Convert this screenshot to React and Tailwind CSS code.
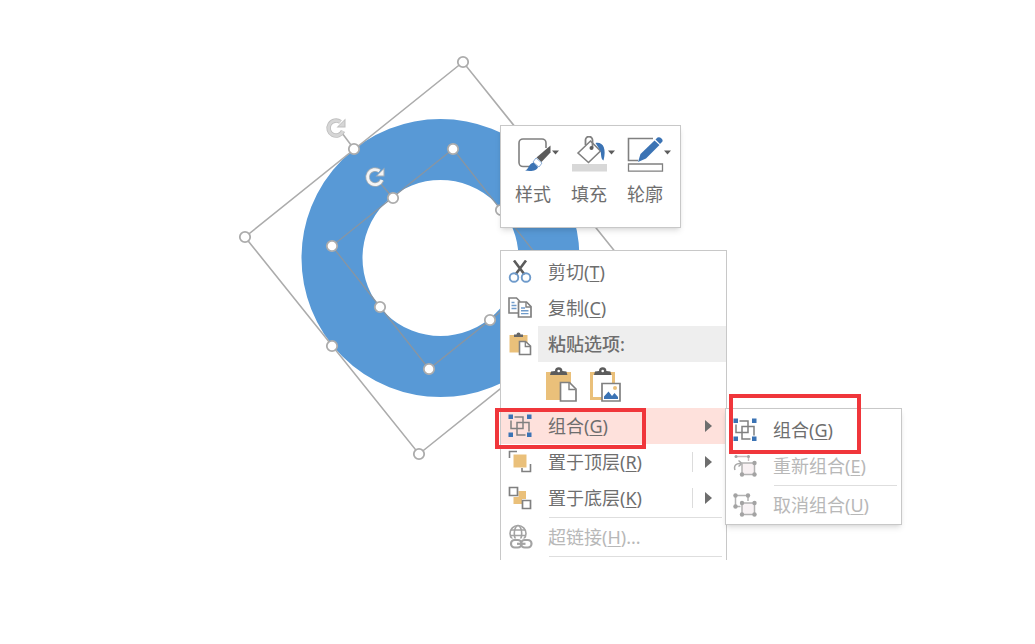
import React from 'react';
import clsx from 'clsx';

const GREY = '#808080';
const BLUE = '#3b73b4';
const TAN = '#eac07a';

function CutIcon() {
  return (
    <svg width="24" height="24" viewBox="0 0 24 24" fill="none">
      <path d="M6 0.500L16.500 14.500M18 0.500L7.500 14.500" stroke="#5c5c5c" strokeWidth="2.600" />
      <circle cx="6" cy="17.500" r="4.300" stroke="#6f9bcb" strokeWidth="1.900" />
      <circle cx="18" cy="17.500" r="4.300" stroke="#6f9bcb" strokeWidth="1.900" />
    </svg>
  );
}

function CopyIcon() {
  return (
    <svg width="24" height="24" viewBox="0 0 24 24" fill="none">
      <path d="M1 2h7.500l3 3v12H1z" fill="#fff" stroke={GREY} strokeWidth="1.600" />
      <path d="M3.500 6.500h3M3.500 9.500h5M3.500 12.500h5" stroke="#6f9bcb" strokeWidth="1.400" />
      <path d="M10.500 6h8l4.500 4.500V21H10.500z" fill="#fff" stroke={GREY} strokeWidth="1.700" />
      <path d="M18 6v5h5" stroke={GREY} strokeWidth="1.400" />
      <path d="M13 12h4M13 14.800h7.500M13 17.600h7.500" stroke="#6f9bcb" strokeWidth="1.400" />
    </svg>
  );
}

function PasteIcon() {
  return (
    <svg width="24" height="24" viewBox="0 0 24 24" fill="none">
      <path d="M1.500 3h18v17.500h-18z" fill={TAN} />
      <path d="M6 5V2.500h2.500a2 2 0 0 1 4 0H15V5z" fill="#666" />
      <path d="M11.500 9.500h6l5 4.500v8.500h-11z" fill="#fff" stroke={GREY} strokeWidth="1.600" />
      <path d="M17.300 10v4.500h5" stroke={GREY} strokeWidth="1.300" />
    </svg>
  );
}

function PasteKeepIcon() {
  return (
    <svg width="32" height="36" viewBox="0 0 32 36" fill="none">
      <path d="M1 5h25v28H1z" fill={TAN} />
      <path d="M5 8l1-3.500 4-0.500a3.700 3.700 0 0 1 7.400 0l4 0.500 1 3.500z" fill="#5c5c5c" />
      <circle cx="13.700" cy="4" r="1.300" fill="#fff" />
      <path d="M15.500 15.500h9l6.500 6.500v12H15.500z" fill="#fff" stroke={GREY} strokeWidth="1.700" />
      <path d="M24 16v6.500h6.500" stroke={GREY} strokeWidth="1.400" />
    </svg>
  );
}

function PastePictureIcon() {
  return (
    <svg width="32" height="36" viewBox="0 0 32 36" fill="none">
      <path d="M2.500 6.500h22v25h-22z" fill="#fff" stroke={TAN} strokeWidth="3" />
      <path d="M5 8l1-3.500 4-0.500a3.700 3.700 0 0 1 7.400 0l4 0.500 1 3.500z" fill="#5c5c5c" />
      <circle cx="13.700" cy="4" r="1.300" fill="#fff" />
      <path d="M13 16.500h18V34H13z" fill="#fff" stroke={GREY} strokeWidth="1.700" />
      <path d="M15 32v-2.500l4.500-5 3.500 4.500 2.500-3 3.500 4v2z" fill={BLUE} />
      <circle cx="26" cy="21" r="2" fill={TAN} />
    </svg>
  );
}

function GroupIcon() {
  return (
    <svg width="24" height="24" viewBox="0 0 24 24" fill="none">
      <path d="M6.500 3H15v11.500H3V6.500" stroke={GREY} strokeWidth="1.500" />
      <path d="M17.500 21H9V8.500h12V17.500" stroke={GREY} strokeWidth="1.500" />
      <path d="M0.500 0.500h4.500v4.500h-4.500zM19 0.500h4.500v4.500h-4.500zM0.500 18.500h4.500v4.500h-4.500zM19 18.500h4.500v4.500h-4.500z" fill={BLUE} />
    </svg>
  );
}

function BringFrontIcon() {
  return (
    <svg width="24" height="24" viewBox="0 0 24 24" fill="none">
      <path d="M1.500 8V1.500H9M22.500 14v7.500H14V18" stroke={GREY} strokeWidth="1.600" />
      <path d="M5.500 4.500h13v13h-13z" fill={TAN} />
    </svg>
  );
}

function SendBackIcon() {
  return (
    <svg width="24" height="24" viewBox="0 0 24 24" fill="none">
      <path d="M10.500 5H18v8h-4v5H5.500V11h5z" fill={TAN} />
      <path d="M1.500 1.500h8v8h-8zM14.500 14.500h8v8h-8z" fill="#fff" stroke={GREY} strokeWidth="1.700" />
    </svg>
  );
}

function LinkIcon() {
  return (
    <svg width="26" height="26" viewBox="0 0 26 26" fill="none" stroke="#a3a3a3" strokeWidth="1.600">
      <circle cx="11" cy="9.500" r="8" />
      <ellipse cx="11" cy="9.500" rx="3.700" ry="8" />
      <path d="M4 6h14M3.500 11.500h15" />
      <path d="M3 14.500h22v9.500H3z" fill="#fff" stroke="none" />
      <rect x="4" y="16" width="10.500" height="7.500" rx="3.700" strokeWidth="2.200" />
      <rect x="14" y="16" width="10.500" height="7.500" rx="3.700" strokeWidth="2.200" />
      <path d="M10 19.800h8.500" strokeWidth="2.200" />
    </svg>
  );
}

function RegroupIcon() {
  return (
    <svg width="24" height="24" viewBox="0 0 24 24" fill="none">
      <path d="M3.500 2.500h12V7" stroke="#c9bcc0" strokeWidth="1.400" />
      <path d="M2 16c-1.500-4 1-7 6-6.500M5.500 6.500l3.500 3-3.500 3" stroke="#a9a9a9" strokeWidth="1.500" />
      <path d="M9 9h12.500v11.500H9z" fill="#f8f1f3" stroke="#b3b3b3" strokeWidth="1.500" />
      <g fill="#a3a3a3">
        <circle cx="9" cy="20.500" r="2.200" />
        <circle cx="21.500" cy="20.500" r="2.200" />
        <circle cx="21.500" cy="9" r="2.200" />
        <circle cx="3" cy="2.500" r="1.500" />
        <circle cx="15.500" cy="2.500" r="1.500" />
      </g>
    </svg>
  );
}

function UngroupIcon() {
  return (
    <svg width="24" height="24" viewBox="0 0 24 24" fill="none">
      <path d="M2.500 2.500H15V8M2.500 2.500v11h5" stroke="#b3b3b3" strokeWidth="1.500" />
      <path d="M9 10h12.500v11.500H9z" fill="#f8f3f5" stroke="#b3b3b3" strokeWidth="1.500" />
      <g fill="#a3a3a3">
        <circle cx="2.500" cy="2.500" r="2.200" />
        <circle cx="15" cy="2.500" r="2.200" />
        <circle cx="2.500" cy="13.500" r="2.200" />
        <circle cx="9" cy="10" r="2.200" />
        <circle cx="21.500" cy="10" r="2.200" />
        <circle cx="9" cy="21.500" r="2.200" />
        <circle cx="21.500" cy="21.500" r="2.200" />
      </g>
    </svg>
  );
}

function StyleIcon() {
  return (
    <svg width="44" height="36" viewBox="0 0 44 36" fill="none">
      <path d="M15 30.500H8a4 4 0 0 1-4-4V7a4 4 0 0 1 4-4h19a4 4 0 0 1 4 4v5" stroke={GREY} strokeWidth="1.600" />
      <path d="M35.500 9.500v7L26.500 26l-5-4.500z" fill="#5c5c5c" />
      <path d="M21 22l6 5-3 4-6-5z" fill="#fff" stroke="#8fb0d8" strokeWidth="1" />
      <path d="M10 34.500c4-1 3-6.500 8.500-8l4.500 4.500c-1 4-7 4.500-13 3.500z" fill={BLUE} />
      <path d="M37 14.500h7l-3.500 4z" fill="#5c5c5c" />
    </svg>
  );
}

function FillIcon() {
  return (
    <svg width="44" height="36" viewBox="0 0 44 36" fill="none">
      <path d="M7 17L19.500 5 29.500 15 17.500 26.500z" fill="#fff" stroke={GREY} strokeWidth="1.600" />
      <path d="M14.500 9V4a3.500 3.500 0 0 1 7 0v8" stroke={GREY} strokeWidth="1.800" />
      <circle cx="20.500" cy="12" r="2" fill="#5c5c5c" />
      <path d="M24.500 7c7-1.500 11.500 5 8 17.500-3-2-2-6-3-9.500z" fill={BLUE} />
      <path d="M1 28h35v7.500H1z" fill="#d8d8d8" />
      <path d="M37 14.500h7l-3.500 4z" fill="#5c5c5c" />
    </svg>
  );
}

function OutlineIcon() {
  return (
    <svg width="44" height="36" viewBox="0 0 44 36" fill="none">
      <path d="M26 2.500H1.500V24.500H11" stroke={GREY} strokeWidth="1.600" />
      <path d="M11 26l2.500-8L27.500 4.500l5 4.500L19 22.500z" fill={BLUE} />
      <path d="M28.500 3.500l2-2q2-1 4 1t0.500 3.500l-2 2z" fill={BLUE} />
      <path d="M1.500 28h34v7.200h-34z" fill="#fff" stroke={GREY} strokeWidth="1.300" />
      <path d="M37 14.500h7l-3.500 4z" fill="#5c5c5c" />
    </svg>
  );
}

// Two selected circles with their rotated selection frames
const outerHandles = [[463, 62], [354, 149], [245, 237], [332, 346], [419, 454]];
const innerHandles = [[453, 149], [393, 198], [332, 246], [380, 307], [429, 369], [490, 320], [501, 210]];

function RotateHandle({ x, y, ring, core }) {
  return (
    <g transform={`translate(${x} ${y})`} fill="none">
      <path d="M4.500 -6A7.500 7.500 0 1 0 7 3" stroke={ring} strokeWidth="4.500" />
      <path d="M9.500 -9.500V-0.500H0.500z" fill={ring} />
      <path d="M4.500 -6A7.500 7.500 0 1 0 7 3" stroke={core} strokeWidth="2.800" />
      <path d="M8.500 -7.500V-1.500H2.500z" fill={core} />
    </g>
  );
}

function RingShape() {
  return (
    <svg className="absolute left-0 top-0" width="660" height="480" viewBox="0 0 660 480" fill="none">
      <circle cx="440.500" cy="258" r="108.500" stroke="#5899d6" strokeWidth="61" />
      <g stroke="#acacac" strokeWidth="1.600">
        <path d="M463 62L245 237 419 454 637 279z" />
        <path d="M354 149L342 133" />
      </g>
      <g stroke="#8995a1" strokeWidth="1.300">
        <path d="M453 149L332 246 429 369 550 272z" />
        <path d="M393 198L381 184" />
      </g>
      {[...outerHandles, ...innerHandles].map(([x, y]) => (
        <circle key={`${x}-${y}`} cx={x} cy={y} r="5.200" fill="#fff" stroke="#acacac" strokeWidth="1.800" />
      ))}
      <RotateHandle x={336} y={128} ring="#bfbfbf" core="#d6d6d6" />
      <RotateHandle x={375} y={177} ring="#a3adb5" core="#f4f4f4" />
    </svg>
  );
}

function MenuItem({ icon, label, hotkey, suffix, disabled, active, arrow, split }) {
  return (
    <button
      type="button"
      role="menuitem"
      disabled={disabled}
      className={clsx(
        'flex h-9 w-full items-center text-left',
        active && 'bg-[#fee1dc]',
        disabled ? 'text-[#b8b8b8]' : 'text-[#6e6e6e]'
      )}
    >
      <span className="flex w-[37px] shrink-0 justify-center">{icon}</span>
      <span className="flex-1 whitespace-nowrap pl-[10px]">
        {label}(<u className="underline underline-offset-2">{hotkey}</u>){suffix}
      </span>
      {split && <span className="mr-3 h-5 w-px bg-[#dcdcdc]" />}
      {arrow && (
        <svg className="mr-3.5" width="7" height="12" viewBox="0 0 7 12">
          <path d="M0 0l7 6-7 6z" fill="#6e6e6e" />
        </svg>
      )}
    </button>
  );
}

function Separator() {
  return <div role="separator" className="my-px ml-12 mr-1 h-px bg-[#dedede]" />;
}

function MiniToolbar() {
  const tools = [
    { label: '样式', icon: <StyleIcon /> },
    { label: '填充', icon: <FillIcon /> },
    { label: '轮廓', icon: <OutlineIcon /> },
  ];

  return (
    <div
      role="toolbar"
      className="absolute left-[500px] top-[125px] flex h-[103px] gap-3 border border-[#c8c8c8] bg-white pl-[14px] pr-[9px] pt-[10px] shadow-md"
    >
      {tools.map((tool) => (
        <button key={tool.label} type="button" className="flex w-11 flex-col items-start gap-[10px] text-[#6e6e6e]">
          <span className="h-9">{tool.icon}</span>
          <span className="leading-6">{tool.label}</span>
        </button>
      ))}
    </div>
  );
}

function ContextMenu() {
  return (
    <div
      role="menu"
      className="absolute left-[500px] top-[250px] w-[227px] border border-b-0 border-[#c8c8c8] bg-white pb-[2px] pt-[3px]"
    >
      <MenuItem icon={<CutIcon />} label="剪切" hotkey="T" />
      <MenuItem icon={<CopyIcon />} label="复制" hotkey="C" />
      <div className="flex h-9 items-center text-[#6e6e6e]">
        <span className="flex w-[37px] shrink-0 justify-center">
          <PasteIcon />
        </span>
        <span className="flex h-full flex-1 items-center bg-[#eeeeee] pl-[10px] font-medium">粘贴选项:</span>
      </div>
      <div className="flex h-[46px] items-center gap-3 pl-11">
        <button type="button" aria-label="保留源格式">
          <PasteKeepIcon />
        </button>
        <button type="button" aria-label="图片">
          <PastePictureIcon />
        </button>
      </div>
      <MenuItem icon={<GroupIcon />} label="组合" hotkey="G" active arrow />
      <MenuItem icon={<BringFrontIcon />} label="置于顶层" hotkey="R" arrow split />
      <MenuItem icon={<SendBackIcon />} label="置于底层" hotkey="K" arrow split />
      <Separator />
      <MenuItem icon={<LinkIcon />} label="超链接" hotkey="H" suffix="..." disabled />
      <Separator />
    </div>
  );
}

function GroupSubmenu() {
  return (
    <div
      role="menu"
      className="absolute left-[725px] top-[408px] w-[177px] border border-[#c8c8c8] bg-white pb-px pt-[3px] shadow-md"
    >
      <MenuItem icon={<GroupIcon />} label="组合" hotkey="G" />
      <MenuItem icon={<RegroupIcon />} label="重新组合" hotkey="E" disabled />
      <Separator />
      <MenuItem icon={<UngroupIcon />} label="取消组合" hotkey="U" disabled />
    </div>
  );
}

export default function App() {
  return (
    <main className="relative min-h-screen w-full overflow-hidden bg-white font-['Noto_Sans','Noto_Sans_CJK_SC',sans-serif] text-[18px] leading-6">
      <RingShape />
      <MiniToolbar />
      <ContextMenu />
      <GroupSubmenu />

      {/* Highlight boxes */}
      <div className="pointer-events-none absolute left-[495px] top-[408px] h-[41px] w-[151px] border-4 border-[#f0363b]" />
      <div className="pointer-events-none absolute left-[729px] top-[394px] h-[60px] w-[132px] border-4 border-[#f0363b]" />
    </main>
  );
}
